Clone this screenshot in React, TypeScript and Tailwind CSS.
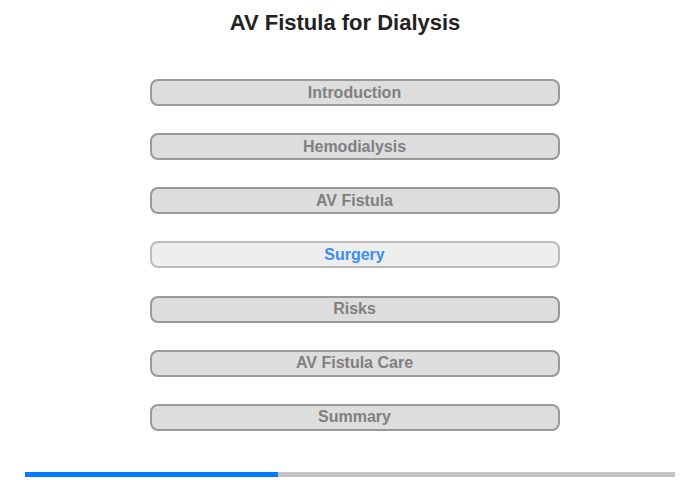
const items = ['Introduction', 'Hemodialysis', 'AV Fistula', 'Surgery', 'Risks', 'AV Fistula Care', 'Summary'];

export default function App() {
    const active = 'Surgery';
    return (
        <div className="w-[700px] h-[480px] bg-white flex flex-col items-center font-['Liberation_Sans',Arial,sans-serif]">
            <h1 className="mt-[9px] mr-[10px] text-[22px] leading-[27px] font-bold text-[#222]">AV Fistula for Dialysis</h1>
            <div className="mt-[43px] ml-[9px] flex flex-col gap-[27.17px]">
                {items.map((item) => (
                    <button
                        key={item}
                        type="button"
                        className={
                            item === active
                                ? 'w-[410px] h-[27px] rounded-[8px] border-2 border-[#bbb] bg-[#eee] text-[#3a8ef6] text-[16px] font-bold leading-none'
                                : 'w-[410px] h-[27px] rounded-[8px] border-2 border-[#999] bg-[#ddd] text-[#808080] text-[16px] font-bold leading-none'
                        }
                    >
                        {item}
                    </button>
                ))}
            </div>
            <div className="mt-auto mb-[3px] w-[650px] h-[5px] bg-[#c3c3c3] flex">
                <div className="w-[253px] h-full bg-[#007bff]" />
            </div>
        </div>
    );
}
